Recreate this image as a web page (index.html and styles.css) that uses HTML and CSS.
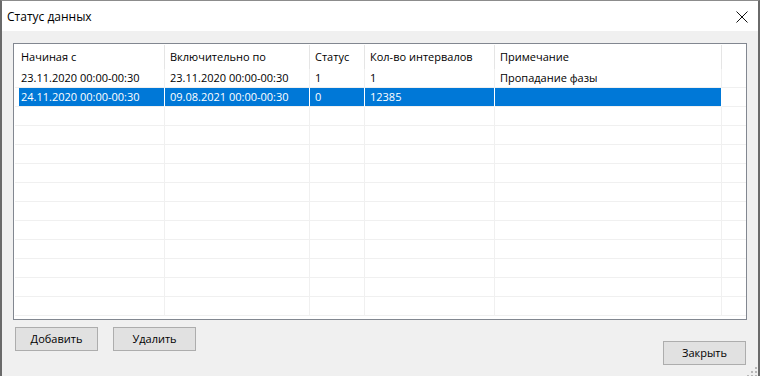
FILE: index.html
```html
<!DOCTYPE html>
<html lang="ru">
<head>
<meta charset="utf-8">
<title>Статус данных</title>
<link rel="stylesheet" href="styles.css">
</head>
<body>
<div class="window">
  <div class="titlebar">
    <span class="title">Статус данных</span>
    <span class="close" aria-label="Закрыть">
      <svg width="12" height="12" viewBox="0 0 12 12"><path d="M0.5 0.5 L11.5 11.5 M11.5 0.5 L0.5 11.5" stroke="#111" stroke-width="1" fill="none"/></svg>
    </span>
  </div>
  <div class="content">
    <div class="grid">
      <div class="head">
        <div class="hc c1">Начиная с</div>
        <div class="hc c2">Включительно по</div>
        <div class="hc c3">Статус</div>
        <div class="hc c4">Кол-во интервалов</div>
        <div class="hc c5">Примечание</div>
        <div class="hc cf"></div>
      </div>
      <div class="body">
        <div class="row">
          <div class="cell c1">23.11.2020 00:00-00:30</div>
          <div class="cell c2">23.11.2020 00:00-00:30</div>
          <div class="cell c3">1</div>
          <div class="cell c4">1</div>
          <div class="cell c5">Пропадание фазы</div>
          <div class="cell cf"></div>
        </div>
        <div class="row selected">
          <div class="cell c1">24.11.2020 00:00-00:30</div>
          <div class="cell c2">09.08.2021 00:00-00:30</div>
          <div class="cell c3">0</div>
          <div class="cell c4">12385</div>
          <div class="cell c5"></div>
          <div class="cell cf"></div>
        </div>
        <div class="row"><div class="cell c1"></div><div class="cell c2"></div><div class="cell c3"></div><div class="cell c4"></div><div class="cell c5"></div><div class="cell cf"></div></div>
        <div class="row"><div class="cell c1"></div><div class="cell c2"></div><div class="cell c3"></div><div class="cell c4"></div><div class="cell c5"></div><div class="cell cf"></div></div>
        <div class="row"><div class="cell c1"></div><div class="cell c2"></div><div class="cell c3"></div><div class="cell c4"></div><div class="cell c5"></div><div class="cell cf"></div></div>
        <div class="row"><div class="cell c1"></div><div class="cell c2"></div><div class="cell c3"></div><div class="cell c4"></div><div class="cell c5"></div><div class="cell cf"></div></div>
        <div class="row"><div class="cell c1"></div><div class="cell c2"></div><div class="cell c3"></div><div class="cell c4"></div><div class="cell c5"></div><div class="cell cf"></div></div>
        <div class="row"><div class="cell c1"></div><div class="cell c2"></div><div class="cell c3"></div><div class="cell c4"></div><div class="cell c5"></div><div class="cell cf"></div></div>
        <div class="row"><div class="cell c1"></div><div class="cell c2"></div><div class="cell c3"></div><div class="cell c4"></div><div class="cell c5"></div><div class="cell cf"></div></div>
        <div class="row"><div class="cell c1"></div><div class="cell c2"></div><div class="cell c3"></div><div class="cell c4"></div><div class="cell c5"></div><div class="cell cf"></div></div>
        <div class="row"><div class="cell c1"></div><div class="cell c2"></div><div class="cell c3"></div><div class="cell c4"></div><div class="cell c5"></div><div class="cell cf"></div></div>
        <div class="row"><div class="cell c1"></div><div class="cell c2"></div><div class="cell c3"></div><div class="cell c4"></div><div class="cell c5"></div><div class="cell cf"></div></div>
        <div class="row"><div class="cell c1"></div><div class="cell c2"></div><div class="cell c3"></div><div class="cell c4"></div><div class="cell c5"></div><div class="cell cf"></div></div>
      </div>
    </div>
    <div class="actions">
      <div class="left-actions">
        <button class="btn">Добавить</button>
        <button class="btn">Удалить</button>
      </div>
      <button class="btn btn-close">Закрыть</button>
    </div>
    <svg class="grip" width="10" height="10" viewBox="0 0 10 10">
      <rect x="8" y="0" width="2" height="2" fill="#b8b8b8"/>
      <rect x="4" y="4" width="2" height="2" fill="#b8b8b8"/>
      <rect x="8" y="4" width="2" height="2" fill="#b8b8b8"/>
      <rect x="0" y="8" width="2" height="2" fill="#b8b8b8"/>
      <rect x="4" y="8" width="2" height="2" fill="#b8b8b8"/>
      <rect x="8" y="8" width="2" height="2" fill="#b8b8b8"/>
    </svg>
  </div>
</div>
</body>
</html>
```

FILE: styles.css
```css
html, body {
  margin: 0;
  padding: 0;
  width: 760px;
  height: 376px;
  overflow: hidden;
  background: #5c5c5c;
}

.window {
  width: 760px;
  height: 376px;
  box-sizing: border-box;
  border-left: 2px solid #6a6a6a;
  border-right: 2px solid #6a6a6a;
  border-top: 1px solid #8c8c8c;
  display: flex;
  flex-direction: column;
  font-family: "Open Sans", "Noto Sans", "Liberation Sans", sans-serif;
  color: #000;
}

.titlebar {
  height: 30px;
  background: #fff;
  display: flex;
  align-items: center;
  justify-content: space-between;
  padding: 0 0 0 5px;
  flex-shrink: 0;
}

.title {
  font-size: 12px;
  line-height: 16px;
  margin-top: 1px;
}

.close {
  width: 12px;
  height: 12px;
  margin-right: 10px;
  margin-top: 1px;
  display: block;
}

.close svg {
  display: block;
}

.content {
  flex: 1;
  background: #f0f0f0;
  padding: 12px 11px 0 11px;
  display: flex;
  flex-direction: column;
  position: relative;
}

.grid {
  height: 277px;
  box-sizing: border-box;
  border: 1px solid #828790;
  background: #fff;
  overflow: hidden;
  font-size: 11px;
}

.head {
  display: flex;
  height: 25px;
}

.hc {
  box-sizing: border-box;
  line-height: 24px;
  padding-left: 5px;
  border-right: 1px solid #e5e5e5;
  margin-top: 1px;
  white-space: nowrap;
  overflow: hidden;
}

.head .c1 { width: 151px; padding-left: 7px; }
.head .cf { border-right: none; }

.body {
  padding-left: 1px;
}

.row {
  display: flex;
  height: 19px;
}

.cell {
  box-sizing: border-box;
  height: 19px;
  line-height: 18px;
  padding-left: 5px;
  border-right: 1px solid #f0f0f0;
  border-bottom: 1px solid #f0f0f0;
  white-space: nowrap;
  overflow: hidden;
}

.row .c1 { padding-left: 6px; }

.c1 { width: 150px; }
.c2 { width: 145px; }
.c3 { width: 55px; }
.c4 { width: 130px; }
.c5 { width: 227px; }
.cf { width: 24px; border-right: none; }

.row:first-child .cell {
  height: 19px;
}

.row.selected .cell {
  background: #0078d7;
  color: #fff;
  border-right-color: #fff;
}

.row.selected .c1 {
  background: linear-gradient(to right, #fff 4px, #0078d7 4px);
}

.row.selected .cf {
  background: #fff;
}

.actions {
  display: flex;
  justify-content: space-between;
  align-items: flex-start;
  margin-top: 7px;
}

.left-actions {
  display: flex;
  gap: 15px;
  margin-left: 2px;
}

.btn {
  width: 83px;
  height: 24px;
  box-sizing: border-box;
  border: 1px solid #adadad;
  background: #e1e1e1;
  font-family: "Open Sans", "Noto Sans", "Liberation Sans", sans-serif;
  font-size: 11px;
  color: #000;
  padding: 0;
  margin: 0;
  line-height: 20px;
}

.btn-close {
  margin-top: 14px;
  margin-right: 1px;
}

.grip {
  position: absolute;
  right: 1px;
  bottom: -1px;
  display: block;
}
```
